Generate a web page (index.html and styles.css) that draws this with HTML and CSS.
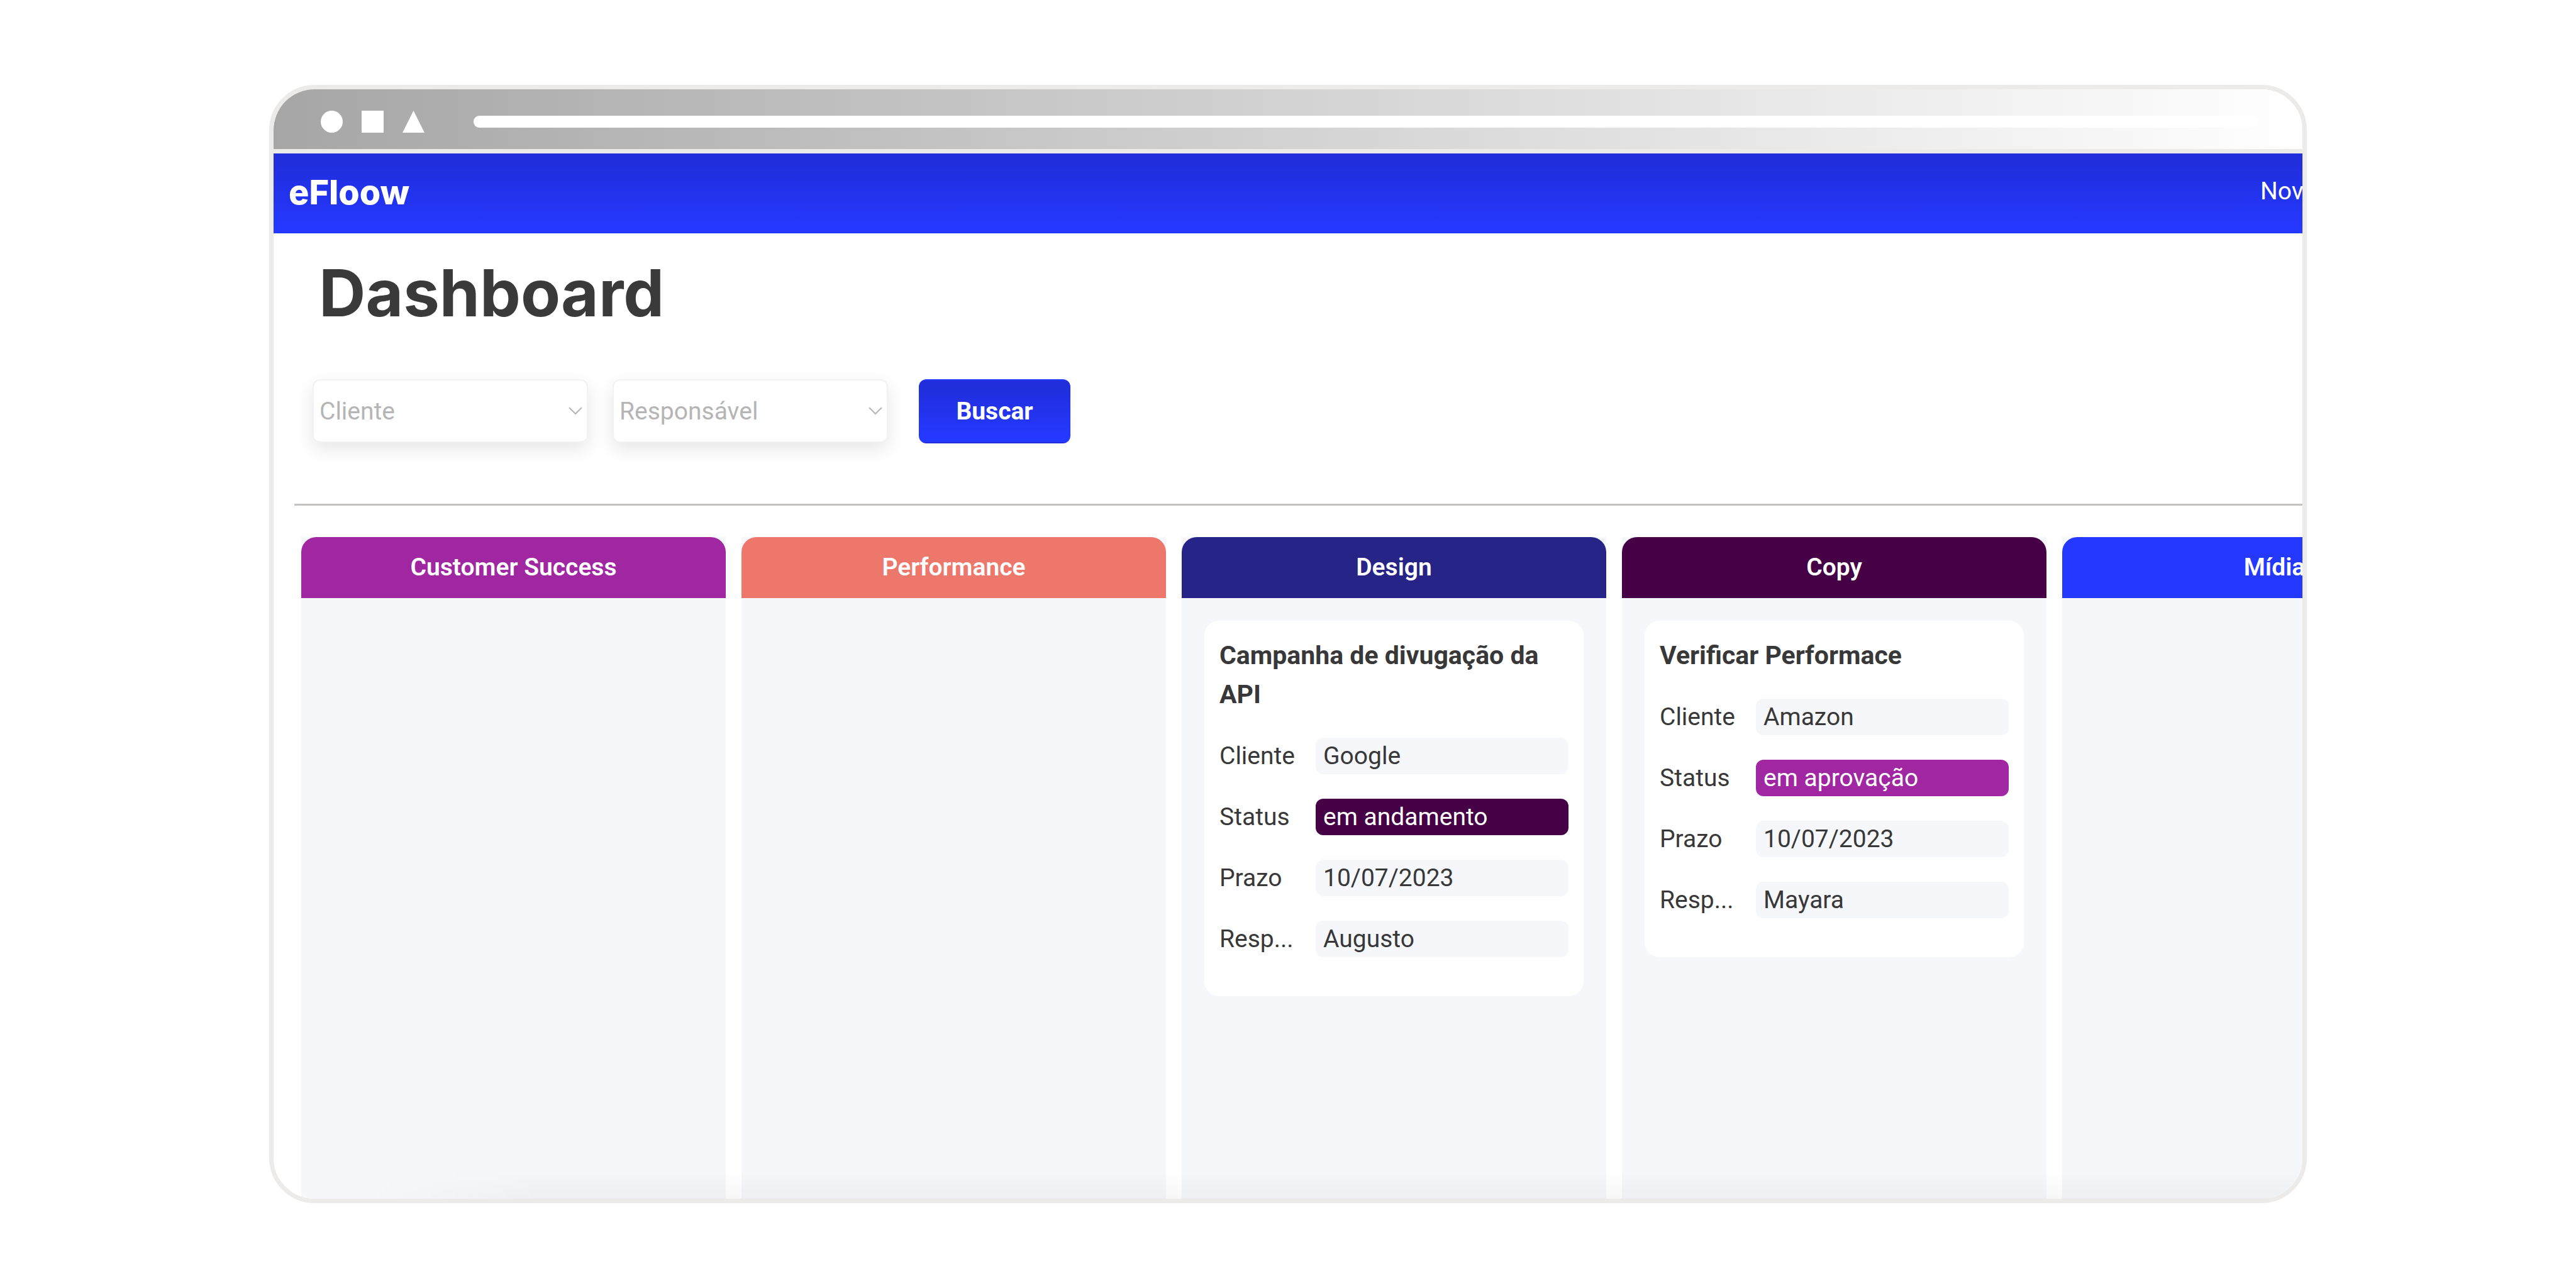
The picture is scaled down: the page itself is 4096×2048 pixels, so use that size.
FILE: index.html
```html
<!DOCTYPE html>
<html lang="pt-BR">
<head>
  <meta charset="utf-8">
  <title>eFloow - Dashboard</title>
  <link rel="stylesheet" href="styles.css">
</head>
<body>
  <div class="window">
    <div class="titlebar">
      <svg class="shape" viewBox="0 0 35 35" aria-hidden="true"><circle cx="17.500" cy="17.500" r="17.500"/></svg>
      <svg class="shape" viewBox="0 0 35 35" aria-hidden="true"><rect width="35" height="35"/></svg>
      <svg class="shape" viewBox="0 0 35 35" aria-hidden="true"><path d="M17.500 0 35 35H0z"/></svg>
      <div class="address"></div>
    </div>

    <header class="topbar">
      <a class="logo" href="#">eFloow</a>
      <nav class="menu"><a class="menu-link" href="#">Nov</a></nav>
    </header>

    <main class="page">
      <h1 class="heading">Dashboard</h1>

      <form class="filters">
        <div class="picker">
          <select class="select" aria-label="Cliente"><option>Cliente</option></select>
          <svg class="chevron" viewBox="0 0 22 13" aria-hidden="true"><path d="M1 1l10 10L21 1"/></svg>
        </div>
        <div class="picker">
          <select class="select" aria-label="Responsável"><option>Responsável</option></select>
          <svg class="chevron" viewBox="0 0 22 13" aria-hidden="true"><path d="M1 1l10 10L21 1"/></svg>
        </div>
        <button class="search" type="button">Buscar</button>
      </form>

      <hr class="rule">

      <div class="board">
        <section class="column">
          <h2 class="column-title success">Customer Success</h2>
        </section>
        <section class="column">
          <h2 class="column-title performance">Performance</h2>
        </section>
        <section class="column">
          <h2 class="column-title design">Design</h2>
          <article class="card">
            <h3 class="card-title">Campanha de divugação da API</h3>
            <dl class="fields">
              <dt class="label">Cliente</dt><dd class="value">Google</dd>
              <dt class="label">Status</dt><dd class="value ongoing">em andamento</dd>
              <dt class="label">Prazo</dt><dd class="value">10/07/2023</dd>
              <dt class="label">Resp...</dt><dd class="value">Augusto</dd>
            </dl>
          </article>
        </section>
        <section class="column">
          <h2 class="column-title copy">Copy</h2>
          <article class="card">
            <h3 class="card-title">Verificar Performace</h3>
            <dl class="fields">
              <dt class="label">Cliente</dt><dd class="value">Amazon</dd>
              <dt class="label">Status</dt><dd class="value approval">em aprovação</dd>
              <dt class="label">Prazo</dt><dd class="value">10/07/2023</dd>
              <dt class="label">Resp...</dt><dd class="value">Mayara</dd>
            </dl>
          </article>
        </section>
        <section class="column">
          <h2 class="column-title media">Mídia</h2>
        </section>
      </div>
    </main>
  </div>
</body>
</html>
```
FILE: styles.css
```css
* {
  box-sizing: border-box;
  margin: 0;
  padding: 0;
}

body {
  display: flex;
  min-height: 100vh;
  padding: 135px 428px;
  background: #fff;
  color: #383838;
  font: 400 39px/58px Roboto, sans-serif;
}

/* Browser window */
.window {
  position: relative;
  display: flex;
  flex: 1;
  flex-direction: column;
  min-width: 0;
  overflow: hidden;
  border: 7px solid #ecebe9;
  border-radius: 72px;
}

/* Soft shade along the bottom edge */
.window::after {
  content: "";
  position: absolute;
  inset: auto 0 0 150px;
  height: 44px;
  background: linear-gradient(to bottom, rgba(0, 0, 0, 0), rgba(0, 0, 0, 0.03));
  -webkit-mask-image: linear-gradient(to right, transparent, #000 280px);
  mask-image: linear-gradient(to right, transparent, #000 280px);
  pointer-events: none;
}

.titlebar {
  display: flex;
  align-items: center;
  gap: 30px;
  height: 102px;
  padding: 7px 71px 0 75px;
  border-bottom: 7px solid #ecebe9;
  background: linear-gradient(to right, #a6a6a6, #fff);
}

.shape {
  width: 35px;
  height: 35px;
  fill: #fff;
}

.address {
  flex: 1;
  height: 19px;
  margin-left: 48px;
  border-radius: 9px;
  background: #fff;
}

.topbar {
  display: flex;
  align-items: center;
  justify-content: space-between;
  height: 127px;
  padding-left: 24px;
  background: linear-gradient(to bottom, #202edb 10%, #2538ff 95%);
}

.logo {
  padding-bottom: 4px;
  color: #fff;
  font: 800 54px/60px Inter, sans-serif;
  text-decoration: none;
}

.menu {
  width: 67px;
  padding-bottom: 8px;
  white-space: nowrap;
}

.menu-link {
  color: #fff;
  text-decoration: none;
}

/* Dashboard */
.page {
  display: flex;
  flex: 1;
  flex-direction: column;
  padding: 37px 0 0 33px;
}

.heading {
  padding-left: 39px;
  color: #3a3a3a;
  font: 700 103px/116px Inter, sans-serif;
}

.filters {
  display: flex;
  align-items: flex-start;
  gap: 39px;
  margin-top: 79px;
  padding-left: 29px;
}

.picker {
  display: grid;
  align-items: center;
}

.select,
.chevron {
  grid-area: 1 / 1;
}

.select {
  width: 438px;
  height: 101px;
  padding: 0 9px;
  appearance: none;
  border: 2px solid #f2f2f2;
  border-radius: 12px;
  background: #fff;
  box-shadow: 0 10px 29px rgba(0, 0, 0, 0.1);
  color: #b5b5b5;
  font: inherit;
}

.chevron {
  justify-self: end;
  width: 22px;
  height: 13px;
  margin-right: 9px;
  fill: none;
  stroke: #b5b5b5;
  stroke-width: 2;
  pointer-events: none;
}

.search {
  width: 241px;
  height: 102px;
  margin-left: 10px;
  border: 2px solid transparent;
  border-radius: 12px;
  background: linear-gradient(to bottom, #202edb 10%, #2538ff 90%);
  color: #fff;
  font: inherit;
  font-weight: 700;
}

.rule {
  height: 3px;
  margin-top: 96px;
  border: 0;
  background: #c6c2c2;
}

/* Board */
.board {
  display: grid;
  flex: 1;
  grid-auto-columns: 675px;
  grid-auto-flow: column;
  gap: 25px;
  margin-top: 50px;
  padding-left: 11px;
}

.column {
  background: #f5f7fb;
}

.column-title {
  border-radius: 24px 24px 0 0;
  color: #fff;
  font-size: 39px;
  font-weight: 600;
  line-height: 97px;
  text-align: center;
}

.success { background: #a026a2; }
.performance { background: #ed776b; }
.design { background: #262487; }
.copy { background: #450046; }
.media { background: #2538ff; }

.card {
  margin: 36px;
  padding: 24px 24px 62px;
  border-radius: 24px;
  background: #fff;
}

.card-title {
  font-size: 41px;
  font-weight: 700;
  line-height: 62px;
}

.fields {
  display: grid;
  grid-template-columns: 129px 1fr;
  gap: 39px 24px;
  margin-top: 38px;
}

.label {
  white-space: nowrap;
}

.value {
  padding-left: 12px;
  border-radius: 12px;
  background: #f5f7fb;
}

.ongoing {
  background: #450046;
  color: #fff;
}

.approval {
  background: #a026a2;
  color: #fff;
}
```
